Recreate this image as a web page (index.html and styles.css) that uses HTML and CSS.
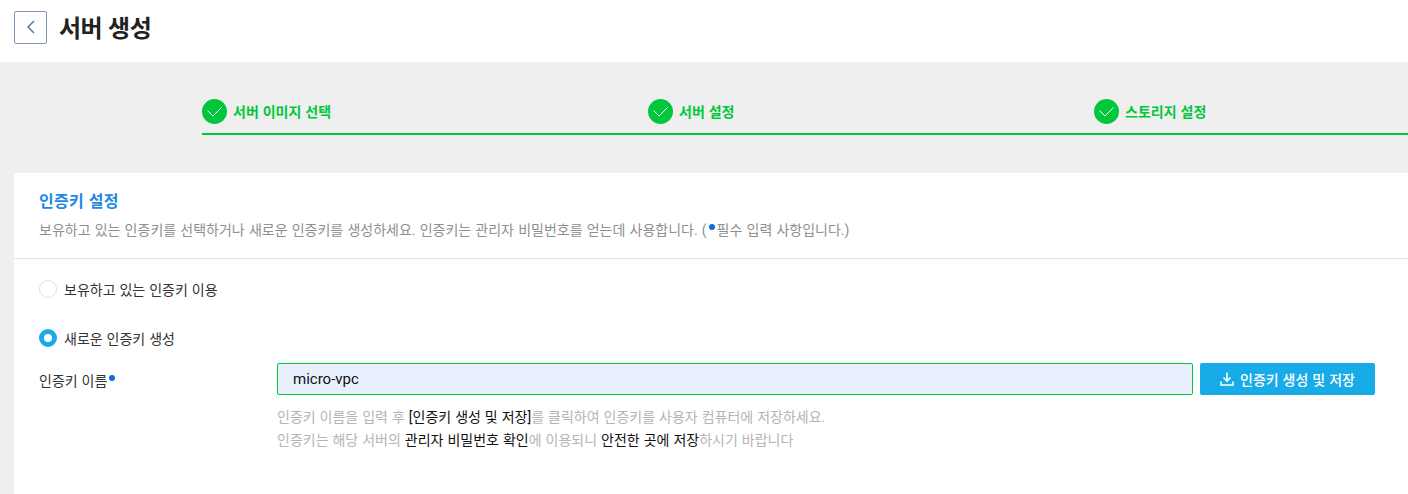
FILE: index.html
```html
<!DOCTYPE html>
<html lang="ko">
<head>
    <meta charset="UTF-8">
    <meta name="viewport" content="width=device-width, initial-scale=1.0">
    <title>서버 생성</title>
    <link rel="stylesheet" href="styles.css">
</head>
<body>
    <header class="page-header">
        <a class="back-btn" href="#" aria-label="뒤로">
            <svg width="10" height="14" viewBox="0 0 10 14"><path d="M8 1 2 7l6 6" fill="none" stroke="#4f6d8f" stroke-width="1.4"/></svg>
        </a>
        <h1>서버 생성</h1>
    </header>

    <main class="content">
        <ol class="steps">
            <li class="step">
                <span class="step-icon"><svg width="15" height="11" viewBox="0 0 15 11"><path d="M0.500 4.500l5.500 5.500L14.500 1.500" fill="none" stroke="#fff" stroke-width="1"/></svg></span>
                <span class="step-name">서버 이미지 선택</span>
            </li>
            <li class="step">
                <span class="step-icon"><svg width="15" height="11" viewBox="0 0 15 11"><path d="M0.500 4.500l5.500 5.500L14.500 1.500" fill="none" stroke="#fff" stroke-width="1"/></svg></span>
                <span class="step-name">서버 설정</span>
            </li>
            <li class="step">
                <span class="step-icon"><svg width="15" height="11" viewBox="0 0 15 11"><path d="M0.500 4.500l5.500 5.500L14.500 1.500" fill="none" stroke="#fff" stroke-width="1"/></svg></span>
                <span class="step-name">스토리지 설정</span>
            </li>
        </ol>

        <section class="card">
            <div class="card-head">
                <h2>인증키 설정</h2>
                <p>보유하고 있는 인증키를 선택하거나 새로운 인증키를 생성하세요. 인증키는 관리자 비밀번호를 얻는데 사용합니다. (<i class="dot"></i>필수 입력 사항입니다.)</p>
            </div>
            <div class="card-body">
                <div class="radio-row">
                    <span class="radio"></span>
                    보유하고 있는 인증키 이용
                </div>
                <div class="radio-row checked">
                    <span class="radio"></span>
                    새로운 인증키 생성
                </div>
                <div class="form-row">
                    <label for="keyName">인증키 이름<i class="dot"></i></label>
                    <input type="text" id="keyName" value="micro-vpc">
                    <button class="save-btn">
                        <svg width="14" height="14" viewBox="0 0 14 14"><path d="M7 0.500v8M3.500 5.500 7 9l3.500-3.500M1 9.500V13h12V9.500" fill="none" stroke="#fff" stroke-width="1.600"/></svg>
                        인증키 생성 및 저장
                    </button>
                </div>
                <div class="help">
                    <p>인증키 이름을 입력 후 <b>[인증키 생성 및 저장]</b>를 클릭하여 인증키를 사용자 컴퓨터에 저장하세요.</p>
                    <p>인증키는 해당 서버의 <b>관리자 비밀번호 확인</b>에 이용되니 <b>안전한 곳에 저장</b>하시기 바랍니다</p>
                </div>
            </div>
        </section>
    </main>
</body>
</html>
```

FILE: styles.css
```css
html, body {
    height: 100%;
}

body {
    margin: 0;
    overflow: hidden;
    background: #efefef;
    color: #222;
    font-family: Roboto, "Noto Sans CJK KR", sans-serif;
    font-size: 14px;
    word-spacing: 0.5px;
}

.page-header {
    display: flex;
    align-items: center;
    height: 62px;
    padding: 0 14px 8px;
    background: #fff;
    box-sizing: border-box;
}

.back-btn {
    display: flex;
    align-items: center;
    justify-content: center;
    width: 33px;
    height: 33px;
    box-sizing: border-box;
    border: 1px solid #7f97b5;
    border-radius: 2px;
}

.page-header h1 {
    margin: 0 0 0 12px;
    padding-bottom: 2px;
    font-size: 24px;
    font-weight: 700;
    letter-spacing: -0.5px;
    color: #222;
}

.content {
    padding-left: 14px;
}

.steps {
    display: grid;
    grid-template-columns: repeat(3, 446px);
    margin: 0 0 38px;
    padding: 37px 0 0 188px;
    list-style: none;
}

.step {
    display: flex;
    align-items: center;
    gap: 6px;
    height: 25px;
    padding-bottom: 9px;
    border-bottom: 2px solid #00c73c;
    color: #00c73c;
    font-size: 14px;
    font-weight: 700;
}

.step-name {
    padding-bottom: 2px;
}

.step-icon {
    display: flex;
    align-items: center;
    justify-content: center;
    width: 25px;
    height: 25px;
    border-radius: 50%;
    background: #00c73c;
}

.card {
    width: 1500px;
    height: 400px;
    background: #fff;
    border-radius: 3px 0 0 0;
}

.card-head {
    height: 86px;
    padding: 18px 25px 0;
    box-sizing: border-box;
    border-bottom: 1px solid #e4e4e4;
}

.card-head h2 {
    margin: 0;
    color: #1e88e5;
    font-size: 16px;
    font-weight: 700;
    letter-spacing: 0.3px;
    line-height: 22px;
}

.card-head p {
    margin: 8px 0 0;
    color: #8f8f8f;
    font-size: 14px;
    word-spacing: 0.7px;
    line-height: 19px;
}

.dot {
    display: inline-block;
    width: 6px;
    height: 6px;
    margin: 0 2px;
    border-radius: 50%;
    background: #0a6fd6;
    vertical-align: 5px;
}

.card-body {
    padding: 21px 25px 0;
}

.radio-row {
    display: flex;
    align-items: center;
    gap: 7px;
    height: 18px;
    margin-bottom: 31px;
    color: #333;
    font-size: 14px;
}

.radio {
    width: 18px;
    height: 18px;
    box-sizing: border-box;
    border: 1px solid #e0e0e0;
    border-radius: 50%;
    background: #fff;
}

.checked {
    margin-bottom: 0;
}

.checked .radio {
    border: 5px solid #17ace8;
}

.form-row {
    display: flex;
    align-items: center;
    margin-top: 16px;
}

.form-row label {
    width: 238px;
    padding-top: 2px;
    color: #333;
    font-size: 14px;
}

.form-row input {
    width: 916px;
    height: 32px;
    padding: 0 15px;
    box-sizing: border-box;
    border: 1px solid #00c73c;
    border-radius: 2px;
    background: #e8f0fe;
    color: #111;
    font-family: Roboto, sans-serif;
    font-size: 15px;
    outline: none;
}

.save-btn {
    display: flex;
    align-items: center;
    justify-content: center;
    gap: 6px;
    width: 175px;
    height: 32px;
    margin-left: 7px;
    border: none;
    border-radius: 2px;
    background: #17ace8;
    color: #fff;
    font-family: inherit;
    font-size: 14px;
    font-weight: 500;
    word-spacing: 0.5px;
}

.help {
    margin: 11px 0 0 238px;
    color: #b4b4b4;
    font-size: 14px;
    line-height: 23px;
}

.help p {
    margin: 0;
}

.help b {
    color: #111;
    font-weight: 400;
}
```
